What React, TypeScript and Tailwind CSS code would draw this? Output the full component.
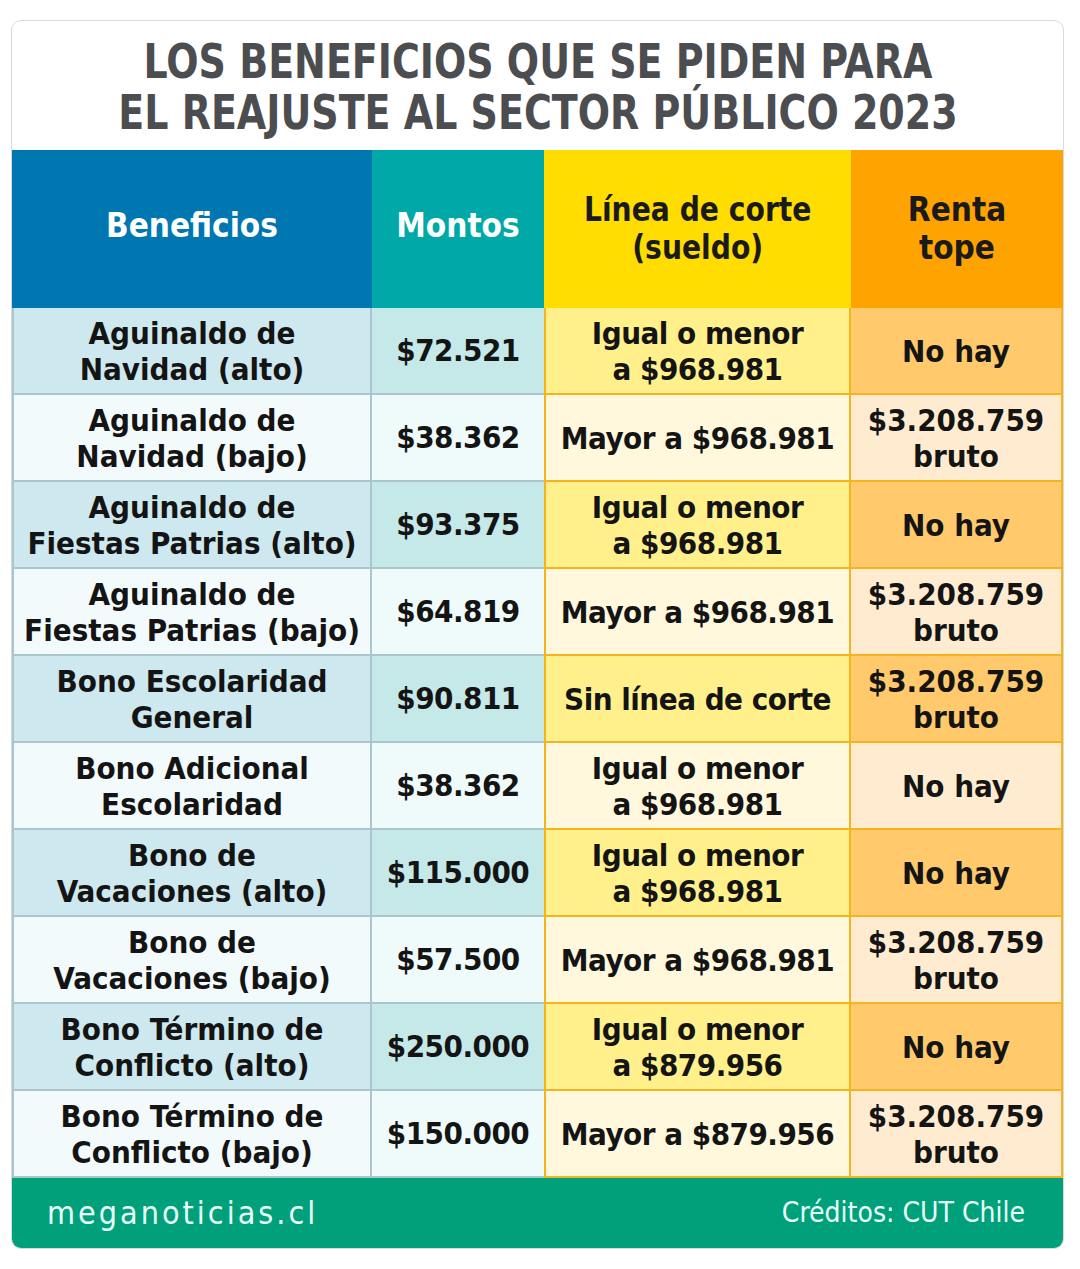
type Row = {
  name: string[]
  amount: string
  cut: string[]
  cap: string[]
}

const rows: Row[] = [
  { name: ['Aguinaldo de', 'Navidad (alto)'], amount: '$72.521', cut: ['Igual o menor', 'a $968.981'], cap: ['No hay'] },
  { name: ['Aguinaldo de', 'Navidad (bajo)'], amount: '$38.362', cut: ['Mayor a $968.981'], cap: ['$3.208.759', 'bruto'] },
  { name: ['Aguinaldo de', 'Fiestas Patrias (alto)'], amount: '$93.375', cut: ['Igual o menor', 'a $968.981'], cap: ['No hay'] },
  { name: ['Aguinaldo de', 'Fiestas Patrias (bajo)'], amount: '$64.819', cut: ['Mayor a $968.981'], cap: ['$3.208.759', 'bruto'] },
  { name: ['Bono Escolaridad', 'General'], amount: '$90.811', cut: ['Sin línea de corte'], cap: ['$3.208.759', 'bruto'] },
  { name: ['Bono Adicional', 'Escolaridad'], amount: '$38.362', cut: ['Igual o menor', 'a $968.981'], cap: ['No hay'] },
  { name: ['Bono de', 'Vacaciones (alto)'], amount: '$115.000', cut: ['Igual o menor', 'a $968.981'], cap: ['No hay'] },
  { name: ['Bono de', 'Vacaciones (bajo)'], amount: '$57.500', cut: ['Mayor a $968.981'], cap: ['$3.208.759', 'bruto'] },
  { name: ['Bono Término de', 'Conflicto (alto)'], amount: '$250.000', cut: ['Igual o menor', 'a $879.956'], cap: ['No hay'] },
  { name: ['Bono Término de', 'Conflicto (bajo)'], amount: '$150.000', cut: ['Mayor a $879.956'], cap: ['$3.208.759', 'bruto'] },
]

const font = { fontFamily: '"DejaVu Sans Condensed", "Liberation Sans Narrow", Roboto, sans-serif' }

function Lines({ lines }: { lines: string[] }) {
  return (
    <div className="text-center leading-[36px]">
      {lines.map((l, i) => (
        <div key={i}>{l}</div>
      ))}
    </div>
  )
}

export default function App() {
  return (
    <div className="w-[1080px] h-[1269px] bg-white pl-[11px] pt-[20px]" style={font}>
      <div className="w-[1053px] rounded-[10px] border border-[#d6dadc] overflow-hidden bg-white">
        {/* Title */}
        <div className="h-[129px] flex items-center justify-center pt-[2px]">
          <h1 className="scale-x-[0.88] whitespace-nowrap text-center text-[#4b4d51] font-bold text-[48px] leading-[51px]">
            LOS BENEFICIOS QUE SE PIDEN PARA
            <br />
            EL REAJUSTE AL SECTOR PÚBLICO 2023
          </h1>
        </div>

        {/* Header */}
        <div className="grid grid-cols-[360px_172px_307px_212px] h-[158px] font-bold text-[33px] leading-[38px]">
          <div className="bg-[#0077b0] text-white flex items-center justify-center pb-[6px]">Beneficios</div>
          <div className="bg-[#00a9a8] text-white flex items-center justify-center pb-[6px]">Montos</div>
          <div className="bg-[#ffdd00] text-[#1a1a1a] flex items-center justify-center text-center">
            <div className="scale-x-[0.95]">
              <div>Línea de corte</div>
              <div>(sueldo)</div>
            </div>
          </div>
          <div className="bg-[#ffa300] text-[#1a1a1a] flex items-center justify-center text-center">
            <div>
              <div>Renta</div>
              <div>tope</div>
            </div>
          </div>
        </div>

        {/* Body */}
        {rows.map((r, i) => {
          const odd = i % 2 === 0
          return (
            <div
              key={i}
              className="grid grid-cols-[360px_172px_307px_212px] h-[87px] text-[#141414] font-semibold text-[31px]"
            >
              <div
                className={`flex items-center justify-center border-l-2 border-r-2 border-b-2 border-[#aac5cc] ${
                  odd ? 'bg-[#cde8ee]' : 'bg-[#f2fafc]'
                }`}
              >
                <Lines lines={r.name} />
              </div>
              <div
                className={`flex items-center justify-center border-b-2 border-[#aac5cc] tracking-[-0.5px] ${
                  odd ? 'bg-[#c5e8e9]' : 'bg-[#effbfb]'
                }`}
              >
                {r.amount}
              </div>
              <div
                className={`flex items-center justify-center border-l-2 border-r-2 border-b-2 border-[#f5b31d] tracking-[-0.5px] ${
                  odd ? 'bg-[#fff08c]' : 'bg-[#fff8dc]'
                }`}
              >
                <Lines lines={r.cut} />
              </div>
              <div
                className={`flex items-center justify-center border-r-2 border-b-2 border-[#f5b31d] ${
                  odd ? 'bg-[#ffc96c]' : 'bg-[#ffecd0]'
                }`}
              >
                <Lines lines={r.cap} />
              </div>
            </div>
          )
        })}

        {/* Footer */}
        <div className="h-[70px] bg-[#00a07b] flex items-center justify-between pl-[35px] pr-[38px] text-[#e8fff8]">
          <span className="text-[32px] tracking-[3px]">meganoticias.cl</span>
          <span className="text-[28px]">Créditos: CUT Chile</span>
        </div>
      </div>
    </div>
  )
}
